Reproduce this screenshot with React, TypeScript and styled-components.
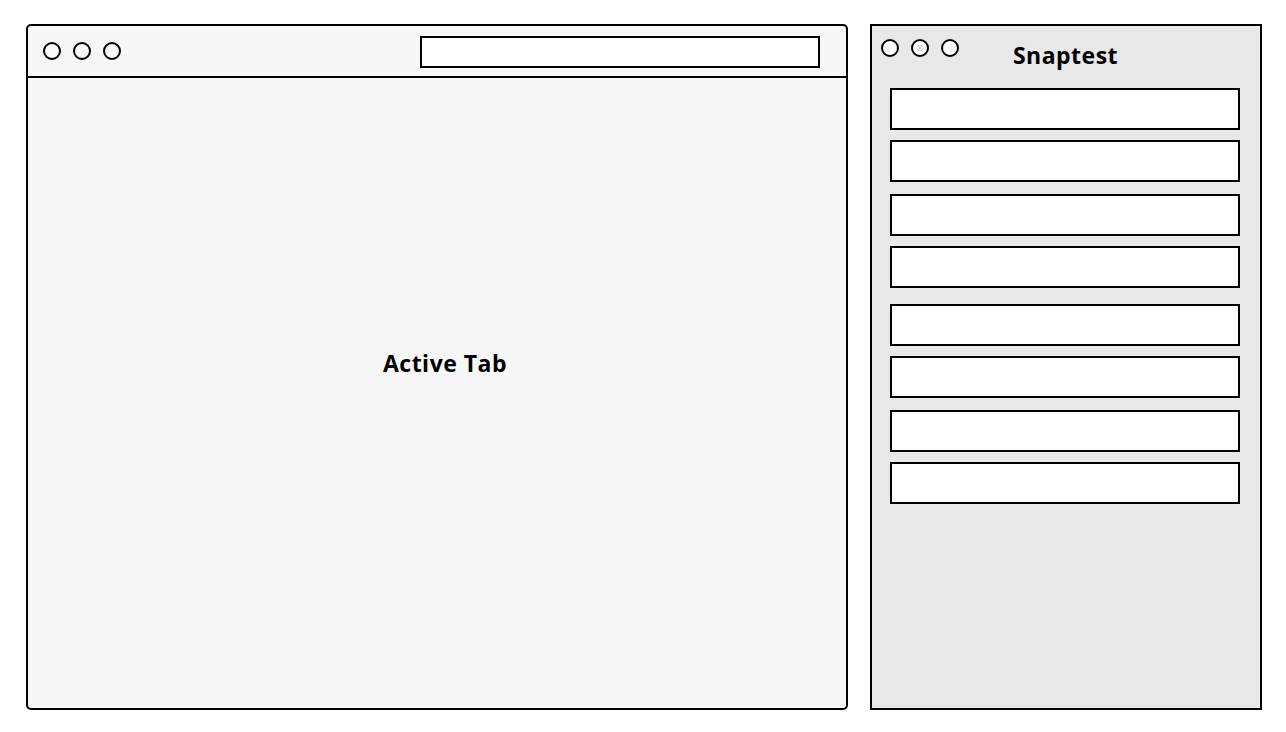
import React from "react";
import styled, { createGlobalStyle } from "styled-components";

const Global = createGlobalStyle`
  html, body { margin: 0; padding: 0; background: #ffffff; }
  body { font-family: "Open Sans", "Lato", sans-serif; color: #000; }
  * { box-sizing: border-box; }
`;

const Page = styled.div`
  display: flex;
  gap: 22px;
  padding: 24px 24px 0 26px;
  width: 1286px;
  height: 732px;
`;

const BrowserWindow = styled.div`
  width: 822px;
  height: 686px;
  border: 2px solid #000;
  border-radius: 5px;
  background: #f7f7f7;
  display: flex;
  flex-direction: column;
  overflow: hidden;
`;

const WindowBar = styled.div`
  height: 52px;
  flex: none;
  border-bottom: 2px solid #000;
  display: flex;
  align-items: center;
  justify-content: space-between;
  padding: 0 26px 0 15px;
`;

const Dots = styled.div`
  display: flex;
  gap: 12px;
`;

const Dot = styled.span`
  display: block;
  width: 18px;
  height: 18px;
  border: 2px solid #000;
  border-radius: 50%;
  background: #fafafa;
`;

const AddressBar = styled.div`
  width: 400px;
  height: 32px;
  margin-top: 2px;
  border: 2px solid #000;
  background: #ffffff;
`;

const TabBody = styled.div`
  flex: 1;
  display: flex;
  align-items: center;
  justify-content: center;
  padding: 0 0 60px 16px;
`;

const TabLabel = styled.div`
  font-size: 23px;
  font-weight: 700;
  line-height: 26px;
  letter-spacing: 0.5px;
`;

const Panel = styled.div`
  width: 392px;
  height: 686px;
  border: 2px solid #000;
  background: #e8e8e8;
  display: flex;
  flex-direction: column;
  padding: 0 20px 0 18px;
`;

const PanelHeader = styled.div`
  display: grid;
  grid-template-columns: 1fr auto 1fr;
  align-items: start;
  height: 62px;
  margin: 0 -10px 0 -9px;
`;

const PanelTitle = styled.h1`
  margin: 14px 0 0;
  font-size: 23px;
  font-weight: 700;
  line-height: 30px;
  letter-spacing: 0.5px;
`;

const HeaderDots = styled(Dots)`
  margin-top: 13px;
`;

const Stack = styled.div<{ $gap: number }>`
  display: flex;
  flex-direction: column;
  gap: ${(p) => p.$gap}px;
`;

const Field = styled.div`
  height: 42px;
  width: 350px;
  border: 2px solid #000;
  background: #fefefe;
`;

const Pair = () => (
  <Stack $gap={10}>
    <Field />
    <Field />
  </Stack>
);

const Group = () => (
  <Stack $gap={12}>
    <Pair />
    <Pair />
  </Stack>
);

export default function App() {
  return (
    <>
      <Global />
      <Page>
        <BrowserWindow>
          <WindowBar>
            <Dots>
              <Dot />
              <Dot />
              <Dot />
            </Dots>
            <AddressBar />
          </WindowBar>
          <TabBody>
            <TabLabel>Active Tab</TabLabel>
          </TabBody>
        </BrowserWindow>
        <Panel>
          <PanelHeader>
            <HeaderDots>
              <Dot />
              <Dot />
              <Dot />
            </HeaderDots>
            <PanelTitle>Snaptest</PanelTitle>
            <span />
          </PanelHeader>
          <Stack $gap={16}>
            <Group />
            <Group />
          </Stack>
        </Panel>
      </Page>
    </>
  );
}
